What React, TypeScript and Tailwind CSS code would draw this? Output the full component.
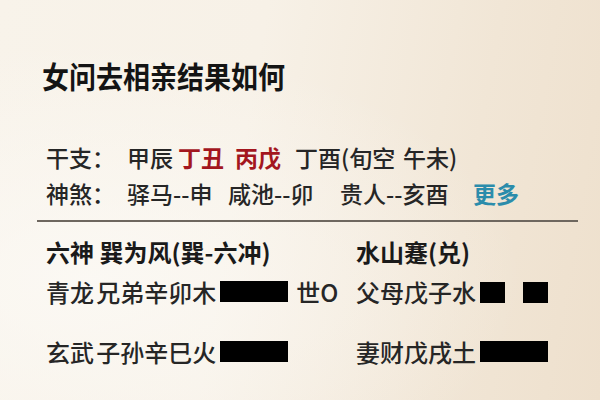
import React from "react";

const font = { fontFamily: '"Noto Sans CJK SC", "Noto Sans", sans-serif' };

function Bar({ w = 68 }: { w?: number }) {
  return <span className="inline-block h-[21px] bg-black" style={{ width: w }} />;
}

export default function App() {
  return (
    <div
      className="relative w-[600px] h-[400px] overflow-hidden text-[#1c1c1c] bg-[linear-gradient(100deg,#f8f3ea_0%,#f7f1e7_40%,#f1e6d6_75%,#eee0cd_100%)]"
      style={font}
    >
      <div className="absolute inset-0 bg-[radial-gradient(ellipse_at_15%_70%,rgba(252,250,246,0.8),rgba(252,250,246,0)_60%)]" />
      <div className="relative flex flex-col">
        <h1 className="pl-[42px] pt-[50px] pb-[5px] text-[27px] leading-[38px] font-bold text-[#141414] origin-top scale-y-110">女问去相亲结果如何</h1>

        <div className="pl-[46px] pt-[46px] flex flex-col text-[23px] font-medium text-[#262626]">
          <div className="flex h-[36px] items-center whitespace-pre">
            <span className="w-[81px]">干支：</span>
            <span className="w-[51px]">甲辰</span>
            <span className="w-[57px] font-bold text-[#a3161e]">丁丑</span>
            <span className="w-[60px] font-bold text-[#a3161e]">丙戊</span>
            <span className="w-[108px]">丁酉(旬空</span>
            <span>午未)</span>
          </div>
          <div className="flex h-[36px] items-center whitespace-pre">
            <span className="w-[81px]">神煞：</span>
            <span className="w-[101px]">驿马--申</span>
            <span className="w-[112px]">咸池--卯</span>
            <span className="w-[133px]">贵人--亥酉</span>
            <span className="font-bold text-[#2b8cab]">更多</span>
          </div>
        </div>

        <div className="ml-[37px] mt-[9px] w-[541px] h-[2px] bg-[#6e675f]" />

        <div className="pl-[46px] pt-[14px] grid grid-cols-[310px_1fr] text-[24px] font-medium text-[#262626]">
          <div className="font-bold leading-[32px] text-[#1a1a1a] whitespace-pre">六神 巽为风(巽-六冲)</div>
          <div className="font-bold leading-[32px] text-[#1a1a1a]">水山蹇(兑)</div>

          <div className="mt-[8px] flex items-center h-[32px] whitespace-pre">
            <span>青龙<span className="text-[10px]"> </span>兄弟辛卯木</span>
            <span className="ml-[4px]"><Bar /></span>
            <span className="ml-[8px]">世O</span>
          </div>
          <div className="mt-[8px] flex items-center h-[32px]">
            <span>父母戊子水</span>
            <span className="ml-[4px] inline-block w-[25px] h-[21px] bg-black" />
            <span className="ml-[18px] inline-block w-[25px] h-[21px] bg-black" />
          </div>

          <div className="mt-[28px] flex items-center h-[32px] whitespace-pre">
            <span>玄武<span className="text-[10px]"> </span>子孙辛巳火</span>
            <span className="ml-[4px]"><Bar /></span>
          </div>
          <div className="mt-[28px] flex items-center h-[32px]">
            <span>妻财戊戌土</span>
            <span className="ml-[4px]"><Bar /></span>
          </div>
        </div>
      </div>
    </div>
  );
}
